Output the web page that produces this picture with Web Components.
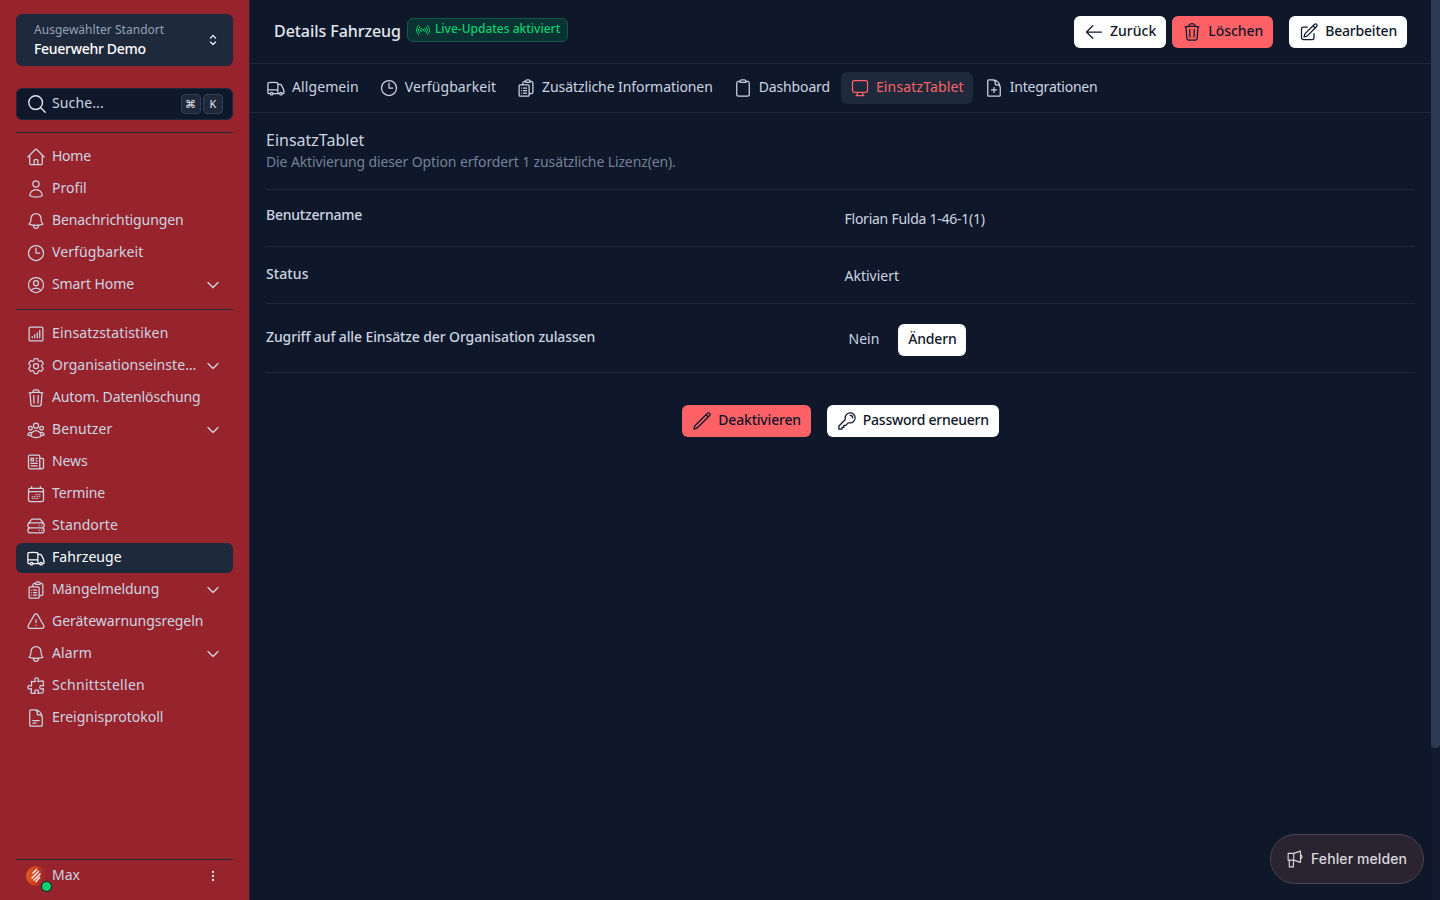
<!DOCTYPE html>
<html lang="de">
<head>
<meta charset="utf-8">
<title>Details Fahrzeug</title>
<style>
  html, body { margin: 0; height: 100%; background: #0f172a; overflow: hidden; }
  body { font-family: "Noto Sans", "Liberation Sans", sans-serif; font-size: 14px; color: #e2e8f0; }
</style>
</head>
<body>
<app-shell>
  <app-sidebar slot="side"></app-sidebar>
  <page-header slot="main"></page-header>
  <tab-bar slot="main">
    <tab-item icon="truck" style="letter-spacing:.1px">Allgemein</tab-item>
    <tab-item icon="clock" style="letter-spacing:.08px">Verfügbarkeit</tab-item>
    <tab-item icon="cliplist" style="letter-spacing:-.08px">Zusätzliche Informationen</tab-item>
    <tab-item icon="clipboard" style="letter-spacing:-.15px">Dashboard</tab-item>
    <tab-item icon="desktop" active style="letter-spacing:.15px">EinsatzTablet</tab-item>
    <tab-item icon="docplus" style="letter-spacing:-.23px">Integrationen</tab-item>
  </tab-bar>
  <tablet-panel slot="main"></tablet-panel>
  <report-button slot="float"></report-button>
</app-shell>

<script>
const ICONS = {
  home: 'm2.25 12 8.954-8.955c.44-.439 1.152-.439 1.591 0L21.75 12M4.5 9.75v10.125c0 .621.504 1.125 1.125 1.125H9.75v-4.875c0-.621.504-1.125 1.125-1.125h2.25c.621 0 1.125.504 1.125 1.125V21h4.125c.621 0 1.125-.504 1.125-1.125V9.75M8.25 21h8.25',
  user: 'M15.75 6a3.75 3.75 0 1 1-7.5 0 3.75 3.75 0 0 1 7.5 0ZM4.501 20.118a7.5 7.5 0 0 1 14.998 0A17.933 17.933 0 0 1 12 21.75c-2.676 0-5.216-.584-7.499-1.632Z',
  bell: 'M14.857 17.082a23.848 23.848 0 0 0 5.454-1.31A8.967 8.967 0 0 1 18 9.75V9A6 6 0 0 0 6 9v.75a8.967 8.967 0 0 1-2.312 6.022c1.733.64 3.56 1.085 5.455 1.31m5.714 0a24.255 24.255 0 0 1-5.714 0m5.714 0a3 3 0 1 1-5.714 0',
  clock: 'M12 6v6h4.5m4.5 0a9 9 0 1 1-18 0 9 9 0 0 1 18 0Z',
  usercircle: 'M17.982 18.725A7.488 7.488 0 0 0 12 15.75a7.488 7.488 0 0 0-5.982 2.975m11.963 0a9 9 0 1 0-11.963 0m11.963 0A8.966 8.966 0 0 1 12 21a8.966 8.966 0 0 1-5.982-2.275M15 9.75a3 3 0 1 1-6 0 3 3 0 0 1 6 0Z',
  down: 'm19.5 8.25-7.5 7.5-7.5-7.5',
  updown: 'M8.25 15 12 18.75 15.75 15m-7.5-6L12 5.25 15.75 9',
  search: 'm21 21-5.197-5.197m0 0A7.5 7.5 0 1 0 5.196 5.196a7.5 7.5 0 0 0 10.607 10.607Z',
  stats: 'M5.25 3.75h13.5a1.5 1.5 0 0 1 1.5 1.5v13.5a1.5 1.5 0 0 1-1.5 1.5H5.25a1.5 1.5 0 0 1-1.5-1.5V5.25a1.5 1.5 0 0 1 1.5-1.5ZM7.5 16.5v-1.5m3 1.5v-3.75m3 3.75V10.5m3 6V7.5',
  cog: 'M9.594 3.94c.09-.542.56-.94 1.11-.94h2.593c.55 0 1.02.398 1.11.94l.213 1.281c.063.374.313.686.645.87.074.04.147.083.22.127.325.196.72.257 1.075.124l1.217-.456a1.125 1.125 0 0 1 1.37.49l1.296 2.247a1.125 1.125 0 0 1-.26 1.431l-1.003.827c-.293.241-.438.613-.43.992a7.723 7.723 0 0 1 0 .255c-.008.378.137.75.43.991l1.004.827c.424.35.534.955.26 1.43l-1.298 2.247a1.125 1.125 0 0 1-1.369.491l-1.217-.456c-.355-.133-.75-.072-1.076.124a6.47 6.47 0 0 1-.22.128c-.331.183-.581.495-.644.869l-.213 1.281c-.09.543-.56.94-1.11.94h-2.594c-.55 0-1.019-.398-1.11-.94l-.213-1.281c-.062-.374-.312-.686-.644-.87a6.52 6.52 0 0 1-.22-.127c-.325-.196-.72-.257-1.076-.124l-1.217.456a1.125 1.125 0 0 1-1.369-.49l-1.297-2.247a1.125 1.125 0 0 1 .26-1.431l1.004-.827c.292-.24.437-.613.43-.991a6.932 6.932 0 0 1 0-.255c.007-.38-.138-.751-.43-.992l-1.004-.827a1.125 1.125 0 0 1-.26-1.43l1.297-2.247a1.125 1.125 0 0 1 1.37-.491l1.216.456c.356.133.751.072 1.076-.124.072-.044.146-.086.22-.128.332-.183.582-.495.644-.869l.214-1.28ZM15 12a3 3 0 1 1-6 0 3 3 0 0 1 6 0Z',
  trash: 'm14.74 9-.346 9m-4.788 0L9.26 9m9.968-3.21c.342.052.682.107 1.022.166m-1.022-.165L18.16 19.673a2.25 2.25 0 0 1-2.244 2.077H8.084a2.25 2.25 0 0 1-2.244-2.077L4.772 5.79m14.456 0a48.108 48.108 0 0 0-3.478-.397m-12 .562c.34-.059.68-.114 1.022-.165m0 0a48.11 48.11 0 0 1 3.478-.397m7.5 0v-.916c0-1.18-.91-2.164-2.09-2.201a51.964 51.964 0 0 0-3.32 0c-1.18.037-2.09 1.022-2.09 2.201v.916m7.5 0a48.667 48.667 0 0 0-7.5 0',
  group: 'M18 18.72a9.094 9.094 0 0 0 3.741-.479 3 3 0 0 0-4.682-2.72m.94 3.198.001.031c0 .225-.012.447-.037.666A11.944 11.944 0 0 1 12 21c-2.17 0-4.207-.576-5.963-1.584A6.062 6.062 0 0 1 6 18.719m12 0a5.971 5.971 0 0 0-.941-3.197m0 0A5.995 5.995 0 0 0 12 12.75a5.995 5.995 0 0 0-5.058 2.772m0 0a3 3 0 0 0-4.681 2.72 8.986 8.986 0 0 0 3.74.477m.94-3.197a5.971 5.971 0 0 0-.94 3.197M15 6.75a3 3 0 1 1-6 0 3 3 0 0 1 6 0Zm6 3a2.25 2.25 0 1 1-4.5 0 2.25 2.25 0 0 1 4.5 0Zm-13.5 0a2.25 2.25 0 1 1-4.5 0 2.25 2.25 0 0 1 4.5 0Z',
  news: 'M12 7.5h1.5m-1.5 3h1.5m-7.5 3h7.5m-7.5 3h7.5m3-9h3.375c.621 0 1.125.504 1.125 1.125V18a2.25 2.25 0 0 1-2.25 2.25M16.5 7.5V18a2.25 2.25 0 0 0 2.25 2.25M16.5 7.5V4.875c0-.621-.504-1.125-1.125-1.125H4.125C3.504 3.75 3 4.254 3 4.875V18a2.25 2.25 0 0 0 2.25 2.25h13.5M6 7.5h3v3H6v-3Z',
  calendar: 'M6.75 3v2.25M17.25 3v2.25M3 18.75V7.5a2.25 2.25 0 0 1 2.25-2.25h13.5A2.25 2.25 0 0 1 21 7.5v11.25m-18 0A2.25 2.25 0 0 0 5.25 21h13.5A2.25 2.25 0 0 0 21 18.75m-18 0v-7.5A2.25 2.25 0 0 1 5.25 9h13.5A2.25 2.25 0 0 1 21 11.25v7.5m-9-6h.008v.008H12v-.008ZM12 15h.008v.008H12V15Zm0 2.25h.008v.008H12v-.008ZM9.75 15h.008v.008H9.75V15Zm0 2.25h.008v.008H9.75v-.008ZM7.5 15h.008v.008H7.5V15Zm0 2.25h.008v.008H7.5v-.008Zm6.75-4.5h.008v.008h-.008v-.008Zm0 2.25h.008v.008h-.008V15Zm0 2.25h.008v.008h-.008v-.008Zm2.25-4.5h.008v.008H16.5v-.008Zm0 2.25h.008v.008H16.5V15Z',
  server: 'M5.25 14.25h13.5m-13.5 0a3 3 0 0 1-3-3m3 3a3 3 0 1 0 0 6h13.5a3 3 0 1 0 0-6m-16.5-3a3 3 0 0 1 3-3h13.5a3 3 0 0 1 3 3m-19.5 0a4.5 4.5 0 0 1 .9-2.7L5.737 5.1a3.375 3.375 0 0 1 2.7-1.35h7.126c1.062 0 2.062.5 2.7 1.35l2.587 3.45a4.5 4.5 0 0 1 .9 2.7m0 0a3 3 0 0 1-3 3m0 3h.008v.008h-.008v-.008Zm0-6h.008v.008h-.008v-.008Zm-3 6h.008v.008h-.008v-.008Zm0-6h.008v.008h-.008v-.008Z',
  truck: 'M8.25 18.75a1.5 1.5 0 0 1-3 0m3 0a1.5 1.5 0 0 0-3 0m3 0h6m-9 0H3.375a1.125 1.125 0 0 1-1.125-1.125V14.25m17.25 4.5a1.5 1.5 0 0 1-3 0m3 0a1.5 1.5 0 0 0-3 0m3 0h1.125c.621 0 1.129-.504 1.09-1.124a17.902 17.902 0 0 0-3.213-9.193 2.056 2.056 0 0 0-1.58-.86H14.25M16.5 18.75h-2.25m0-11.177v-.958c0-.568-.422-1.048-.987-1.106a48.554 48.554 0 0 0-10.026 0 1.106 1.106 0 0 0-.987 1.106v7.635m12-6.677v6.677m0 4.5v-4.5m0 0h-12',
  cliplist: 'M9 12h3.75M9 15h3.75M9 18h3.75m3 .75H18a2.25 2.25 0 0 0 2.25-2.25V6.108c0-1.135-.845-2.098-1.976-2.192a48.424 48.424 0 0 0-1.123-.08m-5.801 0c-.065.21-.1.433-.1.664 0 .414.336.75.75.75h4.5a.75.75 0 0 0 .75-.75 2.25 2.25 0 0 0-.1-.664m-5.8 0A2.251 2.251 0 0 1 13.5 2.25H15c1.012 0 1.867.668 2.15 1.586m-5.8 0c-.376.023-.75.05-1.124.08C9.095 4.01 8.25 4.973 8.25 6.108V8.25m0 0H4.875c-.621 0-1.125.504-1.125 1.125v11.25c0 .621.504 1.125 1.125 1.125h9.75c.621 0 1.125-.504 1.125-1.125V9.375c0-.621-.504-1.125-1.125-1.125H8.25ZM6.75 12h.008v.008H6.75V12Zm0 3h.008v.008H6.75V15Zm0 3h.008v.008H6.75V18Z',
  warn: 'M12 9v3.75m-9.303 3.376c-.866 1.5.217 3.374 1.948 3.374h14.71c1.73 0 2.813-1.874 1.948-3.374L13.949 3.378c-.866-1.5-3.032-1.5-3.898 0L2.697 16.126ZM12 15.75h.007v.008H12v-.008Z',
  puzzle: 'M14.25 6.087c0-.355.186-.676.401-.959.221-.29.349-.634.349-1.003 0-1.036-1.007-1.875-2.25-1.875s-2.25.84-2.25 1.875c0 .369.128.713.349 1.003.215.283.401.604.401.959v0a.64.64 0 0 1-.657.643 48.39 48.39 0 0 1-4.163-.3c.186 1.613.293 3.25.315 4.907a.656.656 0 0 1-.658.663v0c-.355 0-.676-.186-.959-.401a1.647 1.647 0 0 0-1.003-.349c-1.036 0-1.875 1.007-1.875 2.25s.84 2.25 1.875 2.25c.369 0 .713-.128 1.003-.349.283-.215.604-.401.959-.401v0c.31 0 .555.26.532.57a48.039 48.039 0 0 1-.642 5.056c1.518.19 3.058.309 4.616.354a.64.64 0 0 0 .657-.643v0c0-.355-.186-.676-.401-.959a1.647 1.647 0 0 1-.349-1.003c0-1.035 1.008-1.875 2.25-1.875 1.243 0 2.25.84 2.25 1.875 0 .369-.128.713-.349 1.003-.215.283-.4.604-.4.959v0c0 .333.277.599.61.58a48.1 48.1 0 0 0 5.427-.63 48.05 48.05 0 0 0 .582-4.717.532.532 0 0 0-.533-.57v0c-.355 0-.676.186-.959.401-.29.221-.634.349-1.003.349-1.035 0-1.875-1.007-1.875-2.25s.84-2.25 1.875-2.25c.37 0 .713.128 1.003.349.283.215.604.401.96.401v0a.656.656 0 0 0 .658-.663 48.422 48.422 0 0 0-.37-5.36c-1.886.342-3.81.574-5.766.689a.578.578 0 0 1-.61-.58v0Z',
  doc: 'M19.5 14.25v-2.625a3.375 3.375 0 0 0-3.375-3.375h-1.5A1.125 1.125 0 0 1 13.5 7.125v-1.5a3.375 3.375 0 0 0-3.375-3.375H8.25m0 12.75h7.5m-7.5 3H12M10.5 2.25H5.625c-.621 0-1.125.504-1.125 1.125v17.25c0 .621.504 1.125 1.125 1.125h12.75c.621 0 1.125-.504 1.125-1.125V11.25a9 9 0 0 0-9-9Z',
  left: 'M10.5 19.5 3 12m0 0 7.5-7.5M3 12h18',
  edit: 'm16.862 4.487 1.687-1.688a1.875 1.875 0 1 1 2.652 2.652L10.582 16.07a4.5 4.5 0 0 1-1.897 1.13L6 18l.8-2.685a4.5 4.5 0 0 1 1.13-1.897l8.932-8.931Zm0 0L19.5 7.125M18 14v4.75A2.25 2.25 0 0 1 15.75 21H5.25A2.25 2.25 0 0 1 3 18.75V8.25A2.25 2.25 0 0 1 5.25 6H10',
  pencil: 'm16.862 4.487 1.687-1.688a1.875 1.875 0 1 1 2.652 2.652L6.832 19.82a4.5 4.5 0 0 1-1.897 1.13l-2.685.8.8-2.685a4.5 4.5 0 0 1 1.13-1.897L16.863 4.487Zm0 0L19.5 7.125',
  key: 'M15.75 5.25a3 3 0 0 1 3 3m3 0a6 6 0 0 1-7.029 5.912c-.563-.097-1.159.026-1.563.43L10.5 17.25H8.25v2.25H6v2.25H2.25v-2.818c0-.597.237-1.17.659-1.591l6.499-6.499c.404-.404.527-1 .43-1.563A6 6 0 1 1 21.75 8.25Z',
  clipboard: 'M15.666 3.888A2.25 2.25 0 0 0 13.5 2.25h-3c-1.03 0-1.9.693-2.166 1.638m7.332 0c.055.194.084.4.084.612v0a.75.75 0 0 1-.75.75H9a.75.75 0 0 1-.75-.75v0c0-.212.03-.418.084-.612m7.332 0c.646.049 1.288.11 1.927.184 1.1.128 1.907 1.077 1.907 2.185V19.5a2.25 2.25 0 0 1-2.25 2.25H6.75A2.25 2.25 0 0 1 4.5 19.5V6.257c0-1.108.806-2.057 1.907-2.185a48.208 48.208 0 0 1 1.927-.184',
  desktop: 'M9 17.25v1.007a3 3 0 0 1-.879 2.122L7.5 21h9l-.621-.621A3 3 0 0 1 15 18.257V17.25m6-12V15a2.25 2.25 0 0 1-2.25 2.25H5.25A2.25 2.25 0 0 1 3 15V5.25m18 0A2.25 2.25 0 0 0 18.75 3H5.25A2.25 2.25 0 0 0 3 5.25',
  docplus: 'M19.5 14.25v-2.625a3.375 3.375 0 0 0-3.375-3.375h-1.5A1.125 1.125 0 0 1 13.5 7.125v-1.5a3.375 3.375 0 0 0-3.375-3.375H8.25m3.75 9v6m3-3H9m1.5-12H5.625c-.621 0-1.125.504-1.125 1.125v17.25c0 .621.504 1.125 1.125 1.125h12.75c.621 0 1.125-.504 1.125-1.125V11.25a9 9 0 0 0-9-9Z',
  signal: 'M9.348 14.652a3.75 3.75 0 0 1 0-5.304m5.304 0a3.75 3.75 0 0 1 0 5.304m-7.425 2.121a6.75 6.75 0 0 1 0-9.546m9.546 0a6.75 6.75 0 0 1 0 9.546M5.106 18.894c-3.808-3.807-3.808-9.98 0-13.788m13.788 0c3.808 3.807 3.808 9.98 0 13.788M12 12h.008v.008H12V12Zm.375 0a.375.375 0 1 1-.75 0 .375.375 0 0 1 .75 0Z',
  megaphone: 'M1.5 4.5H9L18 1.5V16.5L9 13.5H1.5ZM9 4.5V13.5M18 6.2a3 3 0 0 1 0 5.6M3 13.5V22.5H8.5V13.5',
  dots: 'M12 6.75a.75.75 0 1 1 0-1.5.75.75 0 0 1 0 1.5Zm0 6a.75.75 0 1 1 0-1.5.75.75 0 0 1 0 1.5Zm0 6a.75.75 0 1 1 0-1.5.75.75 0 0 1 0 1.5Z'
};

const FONT = '"Noto Sans", "Liberation Sans", sans-serif';

class UiIcon extends HTMLElement {
  connectedCallback() {
    const size = this.getAttribute('size') || 20;
    const stroke = this.getAttribute('stroke') || 1.5;
    this.attachShadow({ mode: 'open' });
    this.shadowRoot.innerHTML = `
      <style>
        :host { display: inline-flex; flex: none; width: ${size}px; height: ${size}px; }
        svg { display: block; width: 100%; height: 100%; }
      </style>
      <svg viewBox="0 0 24 24" fill="none" stroke="currentColor" stroke-width="${stroke}" stroke-linecap="round" stroke-linejoin="round">
        <path d="${ICONS[this.getAttribute('name')] || ''}"></path>
      </svg>`;
  }
}

class NavItem extends HTMLElement {
  connectedCallback() {
    const chevron = this.hasAttribute('chevron');
    this.attachShadow({ mode: 'open' });
    this.shadowRoot.innerHTML = `
      <style>
        :host { display: flex; align-items: center; height: 30px; padding: 0 12px 0 10px; gap: 6px; border-radius: 6px;
                color: #cbd5e1; font: 400 14px/20px ${FONT}; letter-spacing: -.1px; }
        :host([active]) { background: #1e293b; color: #fff; }
        span { flex: 1; min-width: 0; white-space: nowrap; overflow: hidden; text-overflow: ellipsis; position: relative; top: -1px; }
      </style>
      <ui-icon name="${this.getAttribute('icon')}"></ui-icon>
      <span><slot></slot></span>
      ${chevron ? '<ui-icon name="down" size="16" stroke="2"></ui-icon>' : ''}`;
  }
}

class LocationPicker extends HTMLElement {
  connectedCallback() {
    this.attachShadow({ mode: 'open' });
    this.shadowRoot.innerHTML = `
      <style>
        :host { display: flex; align-items: center; height: 52px; padding: 0 12px 0 18px; background: #1e293b; border-radius: 6px; font-family: ${FONT}; }
        div { flex: 1; display: flex; flex-direction: column; }
        small { font-size: 12px; line-height: 16px; color: #94a3b8; letter-spacing: .03px; }
        b { font-size: 14px; line-height: 20px; margin-top: 1px; font-weight: 500; color: #fff; letter-spacing: -.3px; }
        ui-icon { color: #e2e8f0; margin-top: -1px; }
      </style>
      <div><small>Ausgewählter Standort</small><b>Feuerwehr Demo</b></div>
      <ui-icon name="updown" size="16" stroke="2"></ui-icon>`;
  }
}

class SearchBox extends HTMLElement {
  connectedCallback() {
    this.attachShadow({ mode: 'open' });
    this.shadowRoot.innerHTML = `
      <style>
        :host { display: flex; align-items: center; gap: 4px; height: 32px; box-sizing: border-box; padding: 0 9px; background: #0f172a;
                border: 1px solid #1e293b; border-radius: 6px; color: #cbd5e1; font: 400 14px/20px ${FONT}; letter-spacing: .12px; }
        span { flex: 1; position: relative; top: -1px; }
        ui-icon { color: #e2e8f0; }
        kbd { display: flex; align-items: center; justify-content: center; box-sizing: border-box; width: 20px; height: 20px; padding-bottom: 2px; background: #1e293b;
              border: 1px solid #334155; border-radius: 4px; font: 400 11px ${FONT}; color: #e2e8f0; margin-left: -2px; }
      </style>
      <ui-icon name="search" size="22"></ui-icon>
      <span>Suche...</span>
      <kbd>⌘</kbd><kbd>K</kbd>`;
  }
}

class UserFooter extends HTMLElement {
  connectedCallback() {
    this.attachShadow({ mode: 'open' });
    this.shadowRoot.innerHTML = `
      <style>
        :host { display: flex; align-items: center; height: 32px; padding: 0 12px 0 10px; gap: 6px; color: #cbd5e1; font: 400 14px/20px ${FONT}; }
        span { flex: 1; position: relative; top: -1px; }
        .avatar { position: relative; width: 20px; height: 20px; flex: none; border-radius: 50%;
                  background: linear-gradient(100deg, #d9641f 0%, #d2431f 40%, #a72a2a 75%, #98232c 100%); }
        .avatar svg { position: absolute; left: 4px; top: 2px; width: 12px; height: 16px; }
        .dot { position: absolute; right: -6px; bottom: -6px; width: 9px; height: 9px; border-radius: 50%; background: #00d16f; border: 1px solid #0f172a; }
        ui-icon { color: #e2e8f0; }
      </style>
      <div class="avatar">
        <svg viewBox="0 0 12 16" fill="none" stroke="#fde6df" stroke-width="1.7" stroke-linecap="round">
          <path d="M6.5 1.5 3 5M8.5 3.5 2 10M10 6 4 12M9.5 9.5 6 13.5"></path>
        </svg>
        <div class="dot"></div>
      </div>
      <span>Max</span>
      <ui-icon name="dots" size="16" stroke="2"></ui-icon>`;
  }
}

class AppSidebar extends HTMLElement {
  connectedCallback() {
    this.attachShadow({ mode: 'open' });
    this.shadowRoot.innerHTML = `
      <style>
        :host { display: flex; flex: none; flex-direction: column; width: 250px; height: 900px; box-sizing: border-box; padding: 14px 16px 8px;
                background: #97232c; border-right: 1px solid #1e293b; }
        search-box { margin-top: 22px; }
        hr { border: 0; height: 1px; background: #1e293b; margin: 12px 0 9px; width: 100%; flex: none; }
        hr.mid { margin: 9px 0; }
        nav { display: flex; flex-direction: column; gap: 2px; }
        .grow { flex: 1; }
        hr.bottom { margin: 0; }
      </style>
      <location-picker></location-picker>
      <search-box></search-box>
      <hr>
      <nav>
        <nav-item icon="home" style="letter-spacing:-.25px">Home</nav-item>
        <nav-item icon="user" style="letter-spacing:.05px">Profil</nav-item>
        <nav-item icon="bell">Benachrichtigungen</nav-item>
        <nav-item icon="clock" style="letter-spacing:.1px">Verfügbarkeit</nav-item>
        <nav-item icon="usercircle" chevron>Smart Home</nav-item>
      </nav>
      <hr class="mid">
      <nav>
        <nav-item icon="stats" style="letter-spacing:.14px">Einsatzstatistiken</nav-item>
        <nav-item icon="cog" chevron style="letter-spacing:.05px">Organisationseinstellungen</nav-item>
        <nav-item icon="trash" style="letter-spacing:-.14px">Autom. Datenlöschung</nav-item>
        <nav-item icon="group" chevron style="letter-spacing:.1px">Benutzer</nav-item>
        <nav-item icon="news">News</nav-item>
        <nav-item icon="calendar">Termine</nav-item>
        <nav-item icon="server" style="letter-spacing:.1px">Standorte</nav-item>
        <nav-item icon="truck" active style="letter-spacing:.05px">Fahrzeuge</nav-item>
        <nav-item icon="cliplist" chevron>Mängelmeldung</nav-item>
        <nav-item icon="warn" style="letter-spacing:-.04px">Gerätewarnungsregeln</nav-item>
        <nav-item icon="bell" chevron style="letter-spacing:.15px">Alarm</nav-item>
        <nav-item icon="puzzle" style="letter-spacing:.3px">Schnittstellen</nav-item>
        <nav-item icon="doc" style="letter-spacing:-.02px">Ereignisprotokoll</nav-item>
      </nav>
      <div class="grow"></div>
      <hr class="bottom">
      <user-footer></user-footer>`;
  }
}

class UiButton extends HTMLElement {
  connectedCallback() {
    const icon = this.getAttribute('icon');
    this.attachShadow({ mode: 'open' });
    this.shadowRoot.innerHTML = `
      <style>
        :host { display: inline-flex; align-items: center; gap: 6px; height: 32px; padding: 0 10px; box-sizing: border-box; background: #fff;
                border-radius: 6px; color: #0f172a; font: 500 14px/20px ${FONT}; letter-spacing: -.2px; white-space: nowrap; }
        :host([danger]) { background: #ff6266; }
        span { position: relative; top: -1px; }
      </style>
      ${icon ? `<ui-icon name="${icon}"></ui-icon>` : ''}
      <span><slot></slot></span>`;
  }
}

class PageHeader extends HTMLElement {
  connectedCallback() {
    this.attachShadow({ mode: 'open' });
    this.shadowRoot.innerHTML = `
      <style>
        :host { display: flex; align-items: center; height: 64px; box-sizing: border-box; padding: 0 24px; border-bottom: 1px solid #1e293b; font-family: ${FONT}; }
        h1 { margin: -2px 0 0; font-size: 16px; line-height: 24px; font-weight: 500; color: #e2e8f0; letter-spacing: -.06px; }
        .badge { display: inline-flex; align-items: center; gap: 4px; height: 24px; box-sizing: border-box; padding: 0 7px; margin: -4px 0 0 6px;
                 background: #0b3233; border: 1px solid #14584c; border-radius: 6px; color: #00d16f; font-size: 12px; font-weight: 500; }
        .badge span { position: relative; top: -1px; }
        .actions { margin-left: auto; display: flex; gap: 6px; }
        ui-button[icon="edit"] { margin-left: 10px; }
      </style>
      <h1>Details Fahrzeug</h1>
      <div class="badge"><ui-icon name="signal" size="16"></ui-icon><span>Live-Updates aktiviert</span></div>
      <div class="actions">
        <ui-button icon="left" style="letter-spacing:0">Zurück</ui-button>
        <ui-button icon="trash" danger style="letter-spacing:-.05px">Löschen</ui-button>
        <ui-button icon="edit">Bearbeiten</ui-button>
      </div>`;
  }
}

class TabBar extends HTMLElement {
  connectedCallback() {
    this.attachShadow({ mode: 'open' });
    this.shadowRoot.innerHTML = `
      <style>
        :host { display: flex; align-items: center; gap: 2px; height: 49px; box-sizing: border-box; padding: 0 7px; border-bottom: 1px solid #1e293b; }
      </style>
      <slot></slot>`;
  }
}

class TabItem extends HTMLElement {
  connectedCallback() {
    this.attachShadow({ mode: 'open' });
    this.shadowRoot.innerHTML = `
      <style>
        :host { display: inline-flex; align-items: center; gap: 6px; height: 32px; padding: 0 9px; border-radius: 6px; color: #cbd5e1;
                font: 400 14px/20px ${FONT}; white-space: nowrap; }
        :host([active]) { background: #1e293b; color: #ff6266; }
        span { position: relative; top: -1px; }
      </style>
      <ui-icon name="${this.getAttribute('icon')}"></ui-icon>
      <span><slot></slot></span>`;
  }
}

class DetailRow extends HTMLElement {
  connectedCallback() {
    this.attachShadow({ mode: 'open' });
    this.shadowRoot.innerHTML = `
      <style>
        :host { display: grid; grid-template-columns: 1fr 1fr; column-gap: 8px; box-sizing: border-box; border-bottom: 1px solid #1e293b;
                font: 400 14px/20px ${FONT}; color: #cbd5e1; }
        .label { font-weight: 500; color: #cbd5e1; letter-spacing: -.22px; }
        .value { display: flex; align-items: flex-start; gap: 19px; }
      </style>
      <div class="label"><slot name="label"></slot></div>
      <div class="value"><slot></slot></div>`;
  }
}

class TabletPanel extends HTMLElement {
  connectedCallback() {
    this.attachShadow({ mode: 'open' });
    this.shadowRoot.innerHTML = `
      <style>
        :host { display: block; padding: 16px 16px 0; font-family: ${FONT}; }
        h2 { margin: 0 0 1px; font-size: 16px; line-height: 22px; font-weight: 400; color: #cbd5e1; }
        p { margin: 0; font-size: 14px; line-height: 20px; color: #748197; letter-spacing: -.12px; }
        .intro { padding-bottom: 17px; border-bottom: 1px solid #1e293b; }
        detail-row.a { height: 57px; padding-top: 15px; }
        detail-row.b { height: 57px; padding-top: 17px; }
        detail-row.c { height: 69px; padding-top: 20px; }
        .actions { display: flex; justify-content: center; gap: 16px; padding-top: 32px; }
      </style>
      <div class="intro">
        <h2>EinsatzTablet</h2>
        <p>Die Aktivierung dieser Option erfordert 1 zusätzliche Lizenz(en).</p>
      </div>
      <detail-row class="a"><span slot="label">Benutzername</span><span style="padding-top:4px;letter-spacing:-.25px">Florian Fulda 1-46-1(1)</span></detail-row>
      <detail-row class="b"><span slot="label" style="letter-spacing:.1px">Status</span><span style="padding-top:2px">Aktiviert</span></detail-row>
      <detail-row class="c"><span slot="label" style="display:block;padding-top:3px;letter-spacing:-.12px">Zugriff auf alle Einsätze der Organisation zulassen</span><span style="padding:5px 0 0 4px">Nein</span><ui-button>Ändern</ui-button></detail-row>
      <div class="actions">
        <ui-button icon="pencil" danger style="letter-spacing:-.2px">Deaktivieren</ui-button>
        <ui-button icon="key" style="letter-spacing:-.26px">Password erneuern</ui-button>
      </div>`;
  }
}

class ReportButton extends HTMLElement {
  connectedCallback() {
    this.attachShadow({ mode: 'open' });
    this.shadowRoot.innerHTML = `
      <style>
        :host { position: absolute; right: 16px; bottom: 16px; display: flex; align-items: center; gap: 6px; width: 154px; height: 50px; box-sizing: border-box;
                padding: 0 16px; background: #2a2430; border: 1px solid #4a4450; border-radius: 25px; color: #d9d9de;
                font: 500 14px/20px Inter, ${FONT}; letter-spacing: .1px; white-space: nowrap; }
      </style>
      <ui-icon name="megaphone" size="18"></ui-icon>
      <span>Fehler melden</span>`;
  }
}

class AppShell extends HTMLElement {
  connectedCallback() {
    this.attachShadow({ mode: 'open' });
    this.shadowRoot.innerHTML = `
      <style>
        :host { display: flex; position: relative; width: 1440px; height: 900px; overflow: hidden; background: #0f172a; }
        .main { flex: 1; min-width: 0; display: flex; flex-direction: column; }
        .track { flex: none; width: 9px; background: #111a2e; }
        .thumb { height: 748px; background: #2b3a52; border-radius: 0 0 4px 4px; }
      </style>
      <slot name="side"></slot>
      <div class="main"><slot name="main"></slot></div>
      <div class="track"><div class="thumb"></div></div>
      <slot name="float"></slot>`;
  }
}

customElements.define('ui-icon', UiIcon);
customElements.define('nav-item', NavItem);
customElements.define('location-picker', LocationPicker);
customElements.define('search-box', SearchBox);
customElements.define('user-footer', UserFooter);
customElements.define('app-sidebar', AppSidebar);
customElements.define('ui-button', UiButton);
customElements.define('page-header', PageHeader);
customElements.define('tab-bar', TabBar);
customElements.define('tab-item', TabItem);
customElements.define('detail-row', DetailRow);
customElements.define('tablet-panel', TabletPanel);
customElements.define('report-button', ReportButton);
customElements.define('app-shell', AppShell);
</script>
</body>
</html>
